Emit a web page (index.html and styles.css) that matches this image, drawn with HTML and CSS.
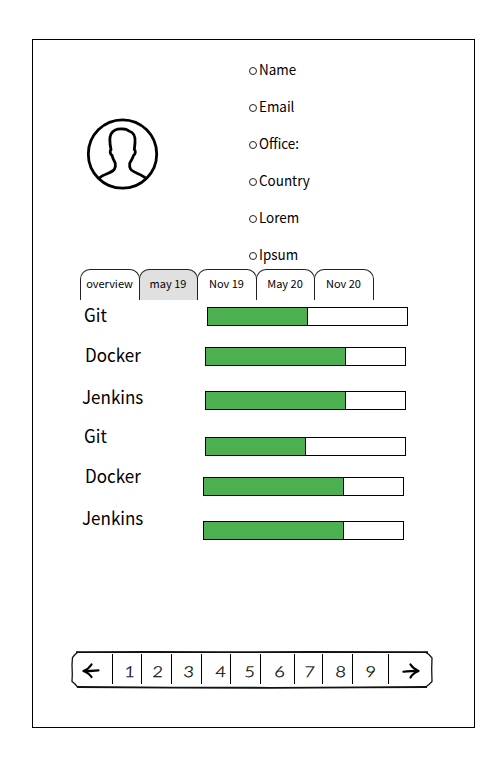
FILE: index.html
```html
<!DOCTYPE html>
<html lang="en">
<head>
<meta charset="utf-8">
<title>Skill profile</title>
<link rel="stylesheet" href="styles.css">
</head>
<body>
<main class="frame">
  <section class="profile">
    <svg class="avatar" viewBox="0 0 72 72" fill="none" stroke="#000" stroke-width="2.8">
      <circle cx="36" cy="36" r="34.2"/>
      <path d="M13 60C17 56 26 55 28 51C29.400 49 29 47 28.700 45C27 42 26 40 25.600 37.500C23.400 36 23.200 33 24.500 31.500C23.300 26 22.600 20 24.500 16C27 11.500 32 10.500 37 11C40 11 41 12 42.500 13C48 14.500 49 20 48.500 25L47.800 31.500C49.500 33 49 36 47 37.500C46.500 40 45 42 43.300 45C43 47 42.600 49 44 51C47 55 55 56 59 60"/>
    </svg>
    <ul class="details">
      <li><span>Name</span></li><li><span>Email</span></li><li><span>Office:</span></li><li><span>Country</span></li><li><span>Lorem</span></li><li><span>Ipsum</span></li>
    </ul>
  </section>
  <nav class="tabs">
    <span class="tab">overview</span><span class="tab active">may 19</span><span class="tab">Nov 19</span><span class="tab">May 20</span><span class="tab">Nov 20</span>
  </nav>
  <section class="skills">
    <div class="skill git first"><span>Git</span><div class="bar"><div class="fill half"></div></div></div>
    <div class="skill docker"><span>Docker</span><div class="bar"><div class="fill"></div></div></div>
    <div class="skill jenkins"><span>Jenkins</span><div class="bar"><div class="fill"></div></div></div>
    <div class="skill git later"><span>Git</span><div class="bar"><div class="fill half"></div></div></div>
    <div class="skill docker later"><span>Docker</span><div class="bar"><div class="fill"></div></div></div>
    <div class="skill jenkins later"><span>Jenkins</span><div class="bar"><div class="fill"></div></div></div>
  </section>
  <nav class="pager">
    <svg class="outline" viewBox="0 0 362 38" fill="none" stroke="#111">
      <path stroke-width="1.800" d="M5 1.200L80 1L150 1.200L240 1L357 1.200M6 36L100 36.600L200 36.800L290 36.400L356 36"/>
      <path stroke-width="1.300" d="M7 1L4 3.500L1.500 6.500L1 14L1.300 23L1 30.500L4 33L7 36.500M354 1L358 3.500L361 7L360.700 18L361 30.500L358 33.500L354 36.500"/>
    </svg>
    <span class="cell"><svg class="arrow" viewBox="0 0 18 16"><path d="M16.500 7.300C12 7.600 6 8.200 2 8M9.500 1.500C8 4 4 7 1.500 8C5 9.500 8 11.500 9.500 14"/></svg></span>
    <span class="cell"><b>1</b></span><span class="cell"><b>2</b></span><span class="cell"><b>3</b></span><span class="cell"><b>4</b></span><span class="cell"><b>5</b></span><span class="cell"><b>6</b></span><span class="cell"><b>7</b></span><span class="cell"><b>8</b></span><span class="cell"><b>9</b></span>
    <span class="cell"><svg class="arrow" viewBox="0 0 18 16"><path d="M1.500 8.700C6 7.500 12 8.300 16 8M8.500 1.500C10 4 13 6.500 16.500 8C13 9.500 10 11.500 8.500 14.500"/></svg></span>
  </nav>
</main>
</body>
</html>
```

FILE: styles.css
```css
* { box-sizing: border-box; }
body {
  margin: 0;
  background: #fff;
  color: #000;
  font-family: "Noto Sans CJK SC", "Noto Sans", sans-serif;
}
.frame {
  width: 443px;
  height: 689px;
  margin: 39px 0 0 32px;
  border: 1px solid #000;
}
.profile { display: flex; height: 229px; }
.avatar { width: 73px; height: 72px; margin: 78px 89px 0 53px; }
.details {
  margin: 11px 0 0;
  padding: 0;
  list-style: none;
  font-size: 14px;
  line-height: 37px;
}
.details li { display: flex; align-items: center; height: 37px; }
.details span { transform: scaleX(.96); transform-origin: left; }
.details li::before {
  content: "";
  width: 6px;
  height: 6px;
  margin: 3px 2.5px 0 .5px;
  border: 1px solid #222;
  border-radius: 50%;
}
.tabs {
  display: grid;
  grid-template-columns: 59px 58px 59px 58px 59px;
  height: 31px;
  margin-left: 47px;
}
.tab {
  margin-right: -1px;
  padding-right: 1px;
  border: 1px solid #222;
  border-bottom: 0;
  border-radius: 10px 10px 0 0;
  font-size: 11px;
  line-height: 27px;
  text-align: center;
  white-space: nowrap;
}
.active { background: #e0e0e0; }
.skills { margin-top: 7px; height: 344px; }
.skill {
  display: grid;
  grid-template-columns: 121px 201px;
  height: 40px;
  margin-left: 51px;
  font-size: 18px;
  line-height: 20px;
}
.first { grid-template-columns: 123px 201px; }
.docker { height: 44px; margin-left: 52px; grid-template-columns: 120px 201px; }
.jenkins { height: 46px; margin-left: 49px; grid-template-columns: 123px 201px; }
.docker.later { grid-template-columns: 118px 201px; }
.jenkins.later { grid-template-columns: 121px 201px; }
.skill span {
  height: 20px;
  margin-top: -3px;
  transform: scaleX(.945);
  transform-origin: left;
}
.jenkins span { margin-top: -5px; }
.skill.later span { margin-top: -12px; }
.skill.jenkins.later span { margin-top: -14px; }
.bar { height: 19px; border: 1px solid #000; }
.fill { width: 140px; height: 100%; background: #4caf50; border-right: 1px solid #000; }
.half { width: 100px; }
.pager {
  position: relative;
  display: grid;
  grid-template-columns: 42px 29px 30px 30px 29px 30px 34px 28px 30px 36px 44px;
  width: 362px;
  height: 38px;
  margin-left: 38px;
  padding-top: 3px;
}
.outline { position: absolute; inset: 0; width: 362px; height: 38px; }
.cell {
  display: flex;
  align-items: center;
  justify-content: center;
  height: 30px;
  border-right: 1px solid #000;
}
.cell:last-child { border-right: 0; }
.cell b {
  font: italic 300 15px/30px Lato, sans-serif;
  -webkit-text-stroke: .25px #000;
  transform: scaleX(1.3) skewX(5deg);
  margin: 3px 0 0 4px;
}
.cell:nth-child(4) b { margin-left: 2px; }
.cell:nth-child(5) b { margin-left: 3px; }
.cell:nth-child(6) b, .cell:nth-child(7) b { margin-left: 8px; }
.cell:nth-child(8) b { margin-left: 3px; }
.cell:nth-child(9) b { margin-left: 1px; }
.cell:nth-child(10) b { margin-left: 5px; }
.cell:nth-child(11) b { margin-left: 0; }
.arrow {
  width: 18px;
  height: 16px;
  margin: 3px 1px 0 0;
  fill: none;
  stroke: #000;
  stroke-width: 2.2;
  stroke-linecap: round;
  stroke-linejoin: round;
}
```
